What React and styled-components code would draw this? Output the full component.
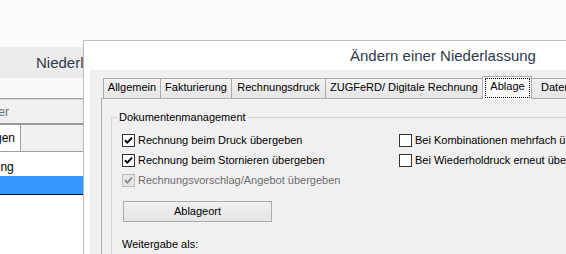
import styled, { createGlobalStyle } from 'styled-components'

const GlobalStyle = createGlobalStyle`
  html, body {
    margin: 0;
    padding: 0;
  }
  body {
    background: #fbfbfb;
    font-family: "Liberation Sans", Arial, sans-serif;
    font-size: 11px;
    color: #000;
  }
`

function Check({ color }) {
  return (
    <svg width="11" height="11" viewBox="0 0 11 11">
      <path d="M2 5.2 L4.3 7.6 L9 2.6" fill="none" stroke={color} strokeWidth="2" />
    </svg>
  )
}

function CheckBox({ checked, disabled, children }) {
  return (
    <CheckRow disabled={disabled}>
      <Box disabled={disabled}>{checked && <Check color={disabled ? '#8a8a8a' : '#000'} />}</Box>
      <span>{children}</span>
    </CheckRow>
  )
}

const tabs = [
  { label: 'Allgemein', width: 58 },
  { label: 'Fakturierung', width: 72 },
  { label: 'Rechnungsdruck', width: 95 },
  { label: 'ZUGFeRD/ Digitale Rechnung', width: 158 },
  { label: 'Ablage', width: 50, active: true },
  { label: 'Datenexport', width: 80 },
]

export default function App() {
  return (
    <Desktop>
      <GlobalStyle />
      <BackWindow>
        <BackTitle>Niederlassungen</BackTitle>
        <BackToolbar />
        <FilterRow>
          <FilterLabel>Suchfilter</FilterLabel>
        </FilterRow>
        <BackTabs>
          <BackTab>Niederlassungen</BackTab>
        </BackTabs>
        <List>
          <ListRow>Hauptniederlassung</ListRow>
          <ListRow selected>Filiale Nord</ListRow>
        </List>
      </BackWindow>

      <Dialog>
        <DialogTitle>Ändern einer Niederlassung</DialogTitle>
        <DialogBody>
          <TabStrip>
            {tabs.map((t, i) => (
              <Tab key={t.label} width={t.width} active={t.active} first={i === 0}>
                {t.active ? <Focus>{t.label}</Focus> : t.label}
              </Tab>
            ))}
          </TabStrip>
          <Panel>
            <Group>
              <Legend>Dokumentenmanagement</Legend>
              <Columns>
                <Column>
                  <CheckBox checked>Rechnung beim Druck übergeben</CheckBox>
                  <CheckBox checked>Rechnung beim Stornieren übergeben</CheckBox>
                  <CheckBox checked disabled>Rechnungsvorschlag/Angebot übergeben</CheckBox>
                  <Button>Ablageort</Button>
                  <Label>Weitergabe als:</Label>
                </Column>
                <Column>
                  <CheckBox>Bei Kombinationen mehrfach übergeben</CheckBox>
                  <CheckBox>Bei Wiederholdruck erneut übergeben</CheckBox>
                </Column>
              </Columns>
            </Group>
          </Panel>
        </DialogBody>
      </Dialog>
    </Desktop>
  )
}

const Desktop = styled.div`
  position: relative;
  width: 566px;
  height: 254px;
  overflow: hidden;
  background: #fbfbfb;
`

/* window behind the dialog */
const BackWindow = styled.div`
  position: absolute;
  left: -120px;
  top: 47px;
  width: 240px;
  bottom: 0;
  display: flex;
  flex-direction: column;
  background: #fff;
`

const BackTitle = styled.div`
  height: 31px;
  line-height: 31px;
  padding-left: 156px;
  background: #ececec;
  color: #2f3a4a;
  font-size: 15px;
  white-space: nowrap;
`

const BackToolbar = styled.div`
  height: 20px;
  background: #f9f9f9;
  border-bottom: 1px solid #a0a0a0;
  box-shadow: 0 1px 0 #d8d8d8;
`

const FilterRow = styled.div`
  height: 25px;
  margin-top: 1px;
  display: flex;
  align-items: center;
  background: #f0f0f0;
  border-bottom: 2px solid #9a9a9a;
  box-sizing: border-box;
`

const FilterLabel = styled.span`
  width: 129px;
  text-align: right;
  color: #6d6d6d;
  font-size: 12px;
  white-space: nowrap;
`

const BackTabs = styled.div`
  height: 26px;
  display: flex;
  background: #f0f0f0;
  border-bottom: 1px solid #a0a0a0;
`

const BackTab = styled.div`
  width: 141px;
  box-sizing: border-box;
  padding-right: 5px;
  text-align: right;
  line-height: 26px;
  font-size: 12px;
  background: #fff;
  border-right: 1px solid #a0a0a0;
  white-space: nowrap;
  overflow: hidden;
`

const List = styled.div`
  flex: 1;
  padding-top: 6px;
  background: #fff;
`

const ListRow = styled.div`
  height: 18px;
  line-height: 18px;
  padding-left: 27px;
  font-size: 12px;
  white-space: nowrap;
  background: ${p => (p.selected ? '#3399ff' : 'transparent')};
  color: ${p => (p.selected ? '#fff' : '#000')};
  border-bottom: ${p => (p.selected ? '1px solid #000' : 'none')};
`

/* front dialog */
const Dialog = styled.div`
  position: absolute;
  left: 83px;
  top: 40px;
  width: 600px;
  height: 260px;
  display: flex;
  flex-direction: column;
  background: #fff;
  border: 1px solid #bcbcbc;
`

const DialogTitle = styled.div`
  height: 29px;
  line-height: 29px;
  padding-left: 266px;
  font-size: 15px;
  color: #2f3a4a;
  white-space: nowrap;
`

const DialogBody = styled.div`
  flex: 1;
  margin-left: 6px;
  padding: 6px 0 0 11px;
  display: flex;
  flex-direction: column;
  background: #f0f0f0;
`

const TabStrip = styled.div`
  height: 22px;
  display: flex;
  align-items: flex-start;
  padding-left: 2px;
  position: relative;
  z-index: 1;
`

const Tab = styled.div`
  width: ${p => p.width}px;
  height: ${p => (p.active ? 23 : 20)}px;
  margin-top: ${p => (p.active ? 0 : 2)}px;
  margin-left: ${p => (p.first ? 0 : -1)}px;
  box-sizing: border-box;
  border: 1px solid #acacac;
  border-bottom: none;
  background: ${p => (p.active ? '#fcfcfc' : 'linear-gradient(#f2f2f2, #e6e6e6)')};
  position: relative;
  z-index: ${p => (p.active ? 1 : 0)};
  text-align: center;
  line-height: 17px;
  white-space: nowrap;
  overflow: hidden;
  flex-shrink: 0;
`

const Focus = styled.span`
  display: block;
  height: 20px;
  margin: 1px 1px 0 2px;
  box-sizing: border-box;
  border: 1px dotted #000;
  line-height: 14px;
  padding-bottom: 4px;
`

const Panel = styled.div`
  flex: 1;
  border: 1px solid #acacac;
  background: #f0f0f0;
  padding-left: 9px;
`

const Group = styled.fieldset`
  margin: 12px 0 0 0;
  padding: 6px 0 0 10px;
  border: 1px solid #d5d5d5;
  min-height: 160px;
`

const Legend = styled.legend`
  margin-left: -5px;
  padding: 0 2px;
  font-size: 11px;
  line-height: 13px;
`

const Columns = styled.div`
  display: grid;
  grid-template-columns: 277px 1fr;
`

const Column = styled.div`
  display: flex;
  flex-direction: column;
  align-items: flex-start;
`

const CheckRow = styled.div`
  height: 20px;
  display: flex;
  align-items: center;
  gap: 3px;
  line-height: 13px;
  white-space: nowrap;
  color: ${p => (p.disabled ? '#6d6d6d' : '#000')};
`

const Box = styled.span`
  width: 13px;
  height: 13px;
  box-sizing: border-box;
  display: flex;
  align-items: center;
  justify-content: center;
  border: 1px solid ${p => (p.disabled ? '#bcbcbc' : '#333')};
  background: ${p => (p.disabled ? '#e6e6e6' : '#fff')};
`

const Button = styled.div`
  width: 149px;
  height: 21px;
  margin: 11px 0 0 1px;
  box-sizing: border-box;
  border: 1px solid #acacac;
  background: linear-gradient(#f0f0f0, #e5e5e5);
  text-align: center;
  line-height: 19px;
`

const Label = styled.div`
  margin-top: 15px;
  line-height: 14px;
  white-space: nowrap;
`
